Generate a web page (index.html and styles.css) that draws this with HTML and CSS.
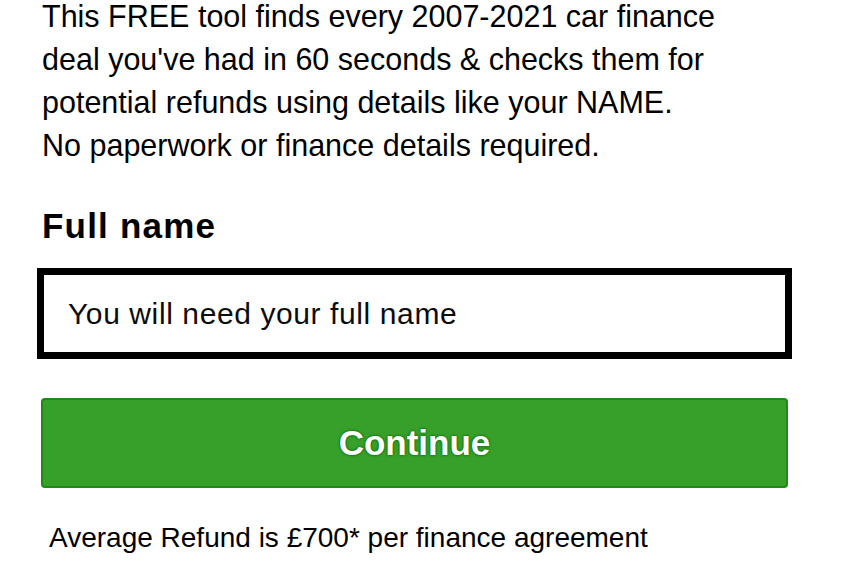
FILE: index.html
```html
<!DOCTYPE html>
<html lang="en">
<head>
<meta charset="utf-8">
<title>Car finance check</title>
<link rel="stylesheet" href="styles.css">
</head>
<body>
<main class="page">
  <p class="intro">This FREE tool finds every 2007-2021 car finance deal you've had in 60 seconds &amp; checks them for potential refunds using details like your NAME. No paperwork or finance details required.</p>
  <form class="form">
    <label class="label" for="fullname">Full name</label>
    <input class="input" id="fullname" type="text" placeholder="You will need your full name">
    <button class="button" type="button">Continue</button>
  </form>
  <p class="note">Average Refund is £700* per finance agreement</p>
</main>
</body>
</html>
```

FILE: styles.css
```css
html, body {
  margin: 0;
  padding: 0;
  background: #ffffff;
}
body {
  font-family: "Liberation Sans", Arial, sans-serif;
  color: #000000;
}
.page {
  width: 760px;
  padding-left: 37px;
  display: flex;
  flex-direction: column;
}
.intro {
  margin: -5px 0 0 5px;
  font-size: 30.5px;
  line-height: 43px;
  width: 676px;
}
.form {
  display: flex;
  flex-direction: column;
  margin-top: 39px;
}
.label {
  font-size: 35px;
  font-weight: 700;
  line-height: 40px;
  margin-left: 5px;
  letter-spacing: 1.2px;
}
.input {
  margin-top: 22px;
  width: 755px;
  height: 91px;
  box-sizing: border-box;
  border: 7px solid #000000;
  padding: 0 24px;
  font-family: inherit;
  font-size: 30px;
  letter-spacing: 0.6px;
  color: #000000;
  outline: none;
  border-radius: 0;
}
.input::placeholder {
  color: #0b0c0c;
  opacity: 1;
}
.button {
  margin: 39px 0 0 4px;
  width: 747px;
  height: 90px;
  box-sizing: border-box;
  background: #36a02a;
  border: 2px solid #1f8a17;
  border-radius: 4px;
  color: #ffffff;
  font-family: inherit;
  font-size: 35px;
  font-weight: 700;
  text-shadow: 0 0 3px #0d6e0a, 0 0 2px #0d6e0a;
  cursor: pointer;
}
.note {
  margin: 32px 0 0 12px;
  font-size: 28px;
  line-height: 36px;
}
```
